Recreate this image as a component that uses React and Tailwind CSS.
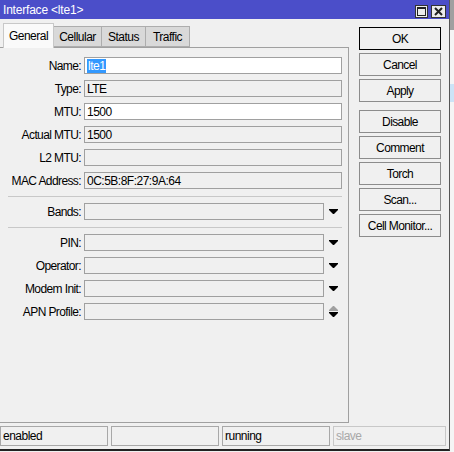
import React from "react";

const font = { fontFamily: '"Liberation Sans", Arial, sans-serif' };

function Arrow({ color = "#000", up = false }) {
  return (
    <svg width="9" height="5" viewBox="0 0 9 5" className={up ? "rotate-180" : ""}>
      <polygon points="0,0 9,0 9,1 5,5 4,5 0,1" fill={color} />
    </svg>
  );
}

function Field({ label, value, white, selected, dropdown, spin }) {
  return (
    <div className="flex items-center h-[17px]">
      <div className="w-[81px] text-right text-[12px] tracking-[-0.6px] text-black leading-none whitespace-nowrap">{label}</div>
      <div
        className={
          "ml-[3px] h-[17px] border border-[#a0a0a0] flex items-center pl-[2px] text-[12px] tracking-[-0.5px] leading-none " +
          (white ? "bg-white " : "bg-[#f0f0f0] ") +
          (dropdown || spin ? "w-[240px]" : "w-[258px]")
        }
      >
        {selected ? (
          <span className="bg-[#3399ff] text-white px-[1px] leading-[14px]">{value}</span>
        ) : (
          <span>{value}</span>
        )}
      </div>
      {dropdown && (
        <div className="w-[18px] flex justify-center">
          <Arrow />
        </div>
      )}
      {spin && (
        <div className="w-[18px] flex flex-col items-center gap-[1px]">
          <Arrow color="#a0a0a0" up />
          <Arrow />
        </div>
      )}
    </div>
  );
}

function Btn({ children, def }) {
  return (
    <div
      className={
        "w-[82px] h-[23px] flex items-center justify-center text-[12px] tracking-[-0.6px] bg-[#f0f0f0] border " +
        (def ? "border-black" : "border-[#8c8c8c]")
      }
    >
      {children}
    </div>
  );
}

export default function App() {
  return (
    <div className="w-[454px] h-[452px] bg-[#f0f0f0] flex overflow-hidden" style={font}>
      <div className="w-[450px] h-[451px] flex flex-col border-r border-b-2 border-r-[#555] border-b-[#222] bg-[#f0f0f0]">
        {/* Title bar */}
        <div className="h-[20px] bg-[#4b4ec9] flex items-center pl-[3px] pr-[3px]">
          <span className="text-white text-[12px] tracking-[-0.2px] leading-none">Interface &lt;lte1&gt;</span>
          <div className="ml-auto flex gap-[3px] mt-[3px]">
            <div className="w-[13px] h-[13px] bg-[#ececec] border border-[#333] flex items-center justify-center">
              <div className="w-[9px] h-[9px] border border-[#222] border-t-2"></div>
            </div>
            <div className="w-[15px] h-[13px] bg-[#ececec] border border-[#333] flex items-center justify-center">
              <svg width="9" height="9" viewBox="0 0 9 9">
                <path d="M1 1 L8 8 M8 1 L1 8" stroke="#222" strokeWidth="2" />
              </svg>
            </div>
          </div>
        </div>

        {/* Body */}
        <div className="flex flex-1">
          {/* Left: tabs + panel */}
          <div className="w-[349px] flex flex-col">
            <div className="h-[28px] flex items-end pl-[3px]">
              <div className="h-[25px] w-[51px] bg-[#fafafa] border border-b-0 border-[#c8c8c8] flex items-center justify-center text-[12px] tracking-[-0.5px] -mb-[1px] relative z-10">
                General
              </div>
              <div className="h-[21px] w-[48px] bg-[#d9d9d9] border border-[#adadad] border-l-0 flex items-center justify-center text-[12px] tracking-[-0.5px]">
                Cellular
              </div>
              <div className="h-[21px] w-[44px] bg-[#d9d9d9] border border-[#adadad] border-l-0 flex items-center justify-center text-[12px] tracking-[-0.5px]">
                Status
              </div>
              <div className="h-[21px] w-[44px] bg-[#d9d9d9] border border-[#adadad] border-l-0 flex items-center justify-center text-[12px] tracking-[-0.5px]">
                Traffic
              </div>
            </div>
            <div className="h-[376px] border-t border-r border-b border-[#a0a0a0] pt-[9px] flex flex-col">
              <div className="flex flex-col gap-[6px]">
                <Field label="Name:" value="lte1" white selected />
                <Field label="Type:" value="LTE" />
                <Field label="MTU:" value="1500" white />
                <Field label="Actual MTU:" value="1500" />
                <Field label="L2 MTU:" value="" />
                <Field label="MAC Address:" value="0C:5B:8F:27:9A:64" />
              </div>
              <div className="ml-[8px] w-[334px] h-[1px] bg-[#c8c8c8] mt-[7px]"></div>
              <div className="mt-[6px]">
                <Field label="Bands:" value="" dropdown />
              </div>
              <div className="ml-[8px] w-[334px] h-[1px] bg-[#c8c8c8] mt-[7px]"></div>
              <div className="flex flex-col gap-[6px] mt-[6px]">
                <Field label="PIN:" value="" dropdown />
                <Field label="Operator:" value="" dropdown />
                <Field label="Modem Init:" value="" dropdown />
                <Field label="APN Profile:" value="" spin />
              </div>
            </div>
          </div>

          {/* Right: buttons */}
          <div className="ml-[10px] pt-[8px] flex flex-col">
            <div className="flex flex-col gap-[3px]">
              <Btn def>OK</Btn>
              <Btn>Cancel</Btn>
              <Btn>Apply</Btn>
            </div>
            <div className="flex flex-col gap-[3px] mt-[8px]">
              <Btn>Disable</Btn>
              <Btn>Comment</Btn>
              <Btn>Torch</Btn>
              <Btn>Scan...</Btn>
              <Btn>Cell Monitor...</Btn>
            </div>
          </div>
        </div>

        {/* Status bar */}
        <div className="h-[20px] mt-[3px] mb-[3px] flex gap-[3px] text-[12px] tracking-[-0.5px]">
          <div className="w-[108px] border border-[#a8a8a8] flex items-center pl-[2px]">enabled</div>
          <div className="w-[108px] border border-[#a8a8a8] flex items-center pl-[2px]"></div>
          <div className="w-[108px] border border-[#a8a8a8] flex items-center pl-[2px]">running</div>
          <div className="w-[113px] border border-[#c8c8c8] flex items-center pl-[2px] text-[#a8a8a8]">slave</div>
        </div>
      </div>
      <div className="flex-1 flex flex-col">
        <div className="h-[30px] bg-[#a0a0a0]"></div>
        <div className="h-[54px] bg-[#f5f5f5]"></div>
        <div className="h-[18px] bg-[#cce4f7]"></div>
        <div className="flex-1 bg-[#f5f5f5]"></div>
      </div>
    </div>
  );
}
